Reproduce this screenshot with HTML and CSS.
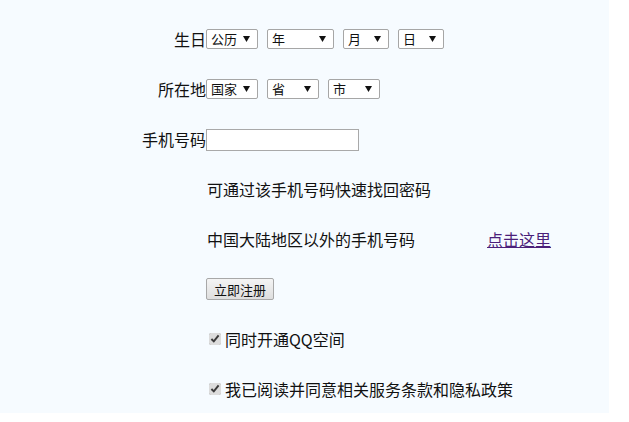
FILE: index.html
```html
<!DOCTYPE html>
<html lang="zh-CN">
<head>
    <meta charset="UTF-8">
    <meta name="viewport" content="width=device-width, initial-scale=1.0">
    <title>注册</title>
    <link rel="stylesheet" href="styles.css">
</head>
<body>
    <div class="RegForm">
        <div class="row">
            <span class="label">生日</span>
            <div class="field">
                <select class="sel w52"><option>公历</option></select>
                <select class="sel w67"><option>年</option></select>
                <select class="sel w46"><option>月</option></select>
                <select class="sel w46"><option>日</option></select>
            </div>
        </div>
        <div class="row">
            <span class="label">所在地</span>
            <div class="field">
                <select class="sel w52"><option>国家</option></select>
                <select class="sel w52"><option>省</option></select>
                <select class="sel w52"><option>市</option></select>
            </div>
        </div>
        <div class="row">
            <span class="label">手机号码</span>
            <div class="field">
                <input type="text" class="phone">
            </div>
        </div>
        <div class="row">
            <span class="label"></span>
            <div class="field txt">可通过该手机号码快速找回密码</div>
        </div>
        <div class="row">
            <span class="label"></span>
            <div class="field txt">中国大陆地区以外的手机号码<a href="#" class="more">点击这里</a></div>
        </div>
        <div class="row">
            <span class="label"></span>
            <div class="field">
                <button class="btn">立即注册</button>
            </div>
        </div>
        <div class="row">
            <span class="label"></span>
            <label class="field check"><input type="checkbox" checked>同时开通QQ空间</label>
        </div>
        <div class="row">
            <span class="label"></span>
            <label class="field check"><input type="checkbox" checked>我已阅读并同意相关服务条款和隐私政策</label>
        </div>
    </div>
</body>
</html>
```

FILE: styles.css
```css
*{
    box-sizing: border-box;
    margin: 0;
    padding: 0;
}
body{
    background: white;
    font-family: "Noto Sans CJK SC", "Liberation Sans", sans-serif;
    font-size: 16px;
    color: #111;
}
.RegForm{
    width: 609px;
    height: 413px;
    background-color: #f6fbff;
    padding-top: 14px;
}
.row{
    display: flex;
    align-items: center;
    height: 50px;
}
.label{
    width: 206px;
    text-align: right;
    line-height: 20px;
}
.field{
    display: flex;
    align-items: center;
    gap: 9px;
}
.sel{
    appearance: none;
    -webkit-appearance: none;
    height: 20px;
    border: 1px solid #a6a6a6;
    border-radius: 2px;
    background-color: white;
    background-image: url("data:image/svg+xml;utf8,<svg xmlns='http://www.w3.org/2000/svg' width='7' height='6'><path d='M0 0H7L3.5 6Z' fill='%23111'/></svg>");
    background-repeat: no-repeat;
    background-position: right 7px center;
    font-family: "Noto Sans CJK SC", sans-serif;
    font-size: 13px;
    color: #111;
    padding: 0 0 0 4px;
    line-height: 18px;
}
.w52{ width: 52px; }
.w67{ width: 67px; }
.w46{ width: 46px; }
.phone{
    width: 153px;
    height: 22px;
    border: 1px solid #a9a9a9;
    background: white;
    margin-top: 1px;
}
.txt{
    gap: 0;
    margin-left: 1px;
}
.more{
    margin-left: 72px;
    color: #4b1f7a;
}
.btn{
    height: 22px;
    padding: 0 7px;
    font-family: "Noto Sans CJK SC", sans-serif;
    font-size: 13px;
    color: #111;
    border: 1px solid #a8a8a8;
    border-radius: 2px;
    background: linear-gradient(#f4f4f4, #dedede);
}
.check{
    gap: 4px;
    margin-left: 3px;
}
.check input{
    width: 12px;
    height: 12px;
    accent-color: #dcdcdc;
}
```
